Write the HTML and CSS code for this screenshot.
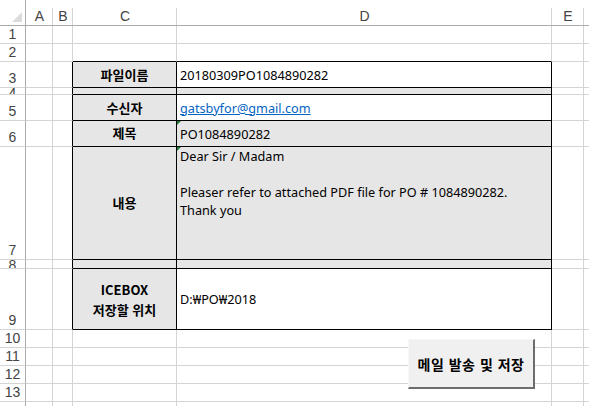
FILE: index.html
```html
<!DOCTYPE html>
<html lang="ko">
<head>
<meta charset="utf-8">
<link rel="stylesheet" href="styles.css">
</head>
<body>
<div class="sheet">
  <div class="row h26 head">
    <div class="rh corner"><svg width="10" height="10" viewBox="0 0 10 10"><polygon points="10,0 10,10 0,10" fill="#dcdcdc"/></svg></div>
    <div class="ch a">A</div><div class="ch b">B</div><div class="ch c">C</div><div class="ch d">D</div><div class="ch e">E</div><div class="ch f"></div>
  </div>
  <div class="row h18">
    <div class="rh">1</div><div class="cell a"></div><div class="cell b"></div><div class="cell c"></div><div class="cell d"></div><div class="cell e"></div><div class="cell f"></div>
  </div>
  <div class="row h18">
    <div class="rh">2</div><div class="cell a"></div><div class="cell b"></div><div class="cell c top"></div><div class="cell d top"></div><div class="cell e"></div><div class="cell f"></div>
  </div>
  <div class="row h26">
    <div class="rh">3</div><div class="cell a"></div><div class="cell b tl"></div>
    <div class="cell c tc fill label">파일이름</div>
    <div class="cell d tc val mid">20180309PO1084890282</div>
    <div class="cell e"></div><div class="cell f"></div>
  </div>
  <div class="row h7">
    <div class="rh clip">4</div><div class="cell a"></div><div class="cell b tl"></div>
    <div class="cell c tc fill"></div><div class="cell d tc fill"></div>
    <div class="cell e"></div><div class="cell f"></div>
  </div>
  <div class="row h26">
    <div class="rh">5</div><div class="cell a"></div><div class="cell b tl"></div>
    <div class="cell c tc fill label">수신자</div>
    <div class="cell d tc val mid"><a class="link" href="#">gatsbyfor@gmail.com</a></div>
    <div class="cell e"></div><div class="cell f"></div>
  </div>
  <div class="row h26">
    <div class="rh">6</div><div class="cell a"></div><div class="cell b tl"></div>
    <div class="cell c tc fill label up">제목</div>
    <div class="cell d tc fill val mid flag">PO1084890282</div>
    <div class="cell e"></div><div class="cell f"></div>
  </div>
  <div class="row h113">
    <div class="rh">7</div><div class="cell a"></div><div class="cell b tl"></div>
    <div class="cell c tc fill label">내용</div>
    <div class="cell d tc fill val body flag">Dear Sir / Madam<br><br>Pleaser refer to attached PDF file for PO # 1084890282.<br>Thank you</div>
    <div class="cell e"></div><div class="cell f"></div>
  </div>
  <div class="row h9">
    <div class="rh clip">8</div><div class="cell a"></div><div class="cell b tl"></div>
    <div class="cell c tc fill"></div><div class="cell d tc fill"></div>
    <div class="cell e"></div><div class="cell f"></div>
  </div>
  <div class="row h61">
    <div class="rh">9</div><div class="cell a"></div><div class="cell b tl"></div>
    <div class="cell c tc fill label two">ICEBOX<br>저장할 위치</div>
    <div class="cell d tc val mid">D:₩PO₩2018</div>
    <div class="cell e"></div><div class="cell f"></div>
  </div>
  <div class="row h18">
    <div class="rh">10</div><div class="cell a"></div><div class="cell b"></div><div class="cell c"></div><div class="cell d"></div><div class="cell e"></div><div class="cell f"></div>
  </div>
  <div class="row h18">
    <div class="rh">11</div><div class="cell a"></div><div class="cell b"></div><div class="cell c"></div><div class="cell d"></div><div class="cell e"></div><div class="cell f"></div>
  </div>
  <div class="row h18">
    <div class="rh">12</div><div class="cell a"></div><div class="cell b"></div><div class="cell c"></div><div class="cell d"></div><div class="cell e"></div><div class="cell f"></div>
  </div>
  <div class="row h18">
    <div class="rh">13</div><div class="cell a"></div><div class="cell b"></div><div class="cell c"></div><div class="cell d"></div><div class="cell e"></div><div class="cell f"></div>
  </div>
  <div class="row h18">
    <div class="rh"></div><div class="cell a"></div><div class="cell b"></div><div class="cell c"></div><div class="cell d"></div><div class="cell e"></div><div class="cell f"></div>
  </div>
  <button class="btn" type="button">메일 발송 및 저장</button>
</div>
</body>
</html>
```

FILE: styles.css
```css
* { box-sizing: border-box; }
html, body { margin: 0; padding: 0; background: #fff; }
body { width: 589px; height: 406px; overflow: hidden; }

.sheet {
  position: relative;
  width: 589px;
  height: 406px;
  overflow: hidden;
  font-family: "Noto Sans", "Noto Sans CJK KR", sans-serif;
  font-size: 13px;
  color: #000;
}

.row { display: flex; overflow: hidden; }
.h26 { height: 26px; }
.h18 { height: 18px; }
.h7 { height: 7px; }
.h9 { height: 9px; }
.h113 { height: 113px; }
.h61 { height: 61px; }

.rh {
  width: 26px;
  flex: none;
  border-right: 1px solid #ababab;
  border-bottom: 1px solid #d4d4d4;
  display: flex;
  align-items: flex-end;
  justify-content: center;
  padding-bottom: 1px;
  font-family: "Liberation Sans", "Noto Sans", sans-serif;
  font-size: 14px;
  line-height: 16px;
  color: #444;
  overflow: hidden;
}
.rh.clip { align-items: flex-start; padding: 0; line-height: 10px; }
.corner {
  border-bottom-color: #ababab;
  align-items: flex-end;
  justify-content: flex-end;
  padding: 0 3px 3px 0;
}
.corner svg { display: block; }

.ch {
  flex: none;
  height: 26px;
  border-bottom: 1px solid #ababab;
  background: linear-gradient(#d4d4d4, #d4d4d4) right 8px / 1px 18px no-repeat;
  display: flex;
  align-items: center;
  justify-content: center;
  padding-top: 6px;
  font-family: "Liberation Sans", "Noto Sans", sans-serif;
  font-size: 14px;
  color: #444;
}

.cell {
  flex: none;
  border-right: 1px solid #d4d4d4;
  border-bottom: 1px solid #d4d4d4;
  overflow: hidden;
  position: relative;
}
.a { width: 27px; }
.b { width: 20px; }
.c { width: 104px; }
.d { width: 375px; }
.e { width: 32px; }
.f { flex: 1; }
.ch.f { flex: 1; background: none; }
.cell.f { border-right: none; }

.top { border-bottom-color: #000; }
.tl { border-right-color: #000; }
.tc { border-right-color: #000; border-bottom-color: #000; }
.fill { background: #e7e6e6; }

.label {
  display: flex;
  align-items: center;
  justify-content: center;
  text-align: center;
  font-family: "Noto Sans CJK KR", sans-serif;
  font-weight: 700;
  font-size: 13px;
  line-height: 18px;
}
.label.up { align-items: flex-start; padding-top: 3px; }
.label.two { line-height: 20px; padding-top: 2px; }

.val { padding-left: 3px; white-space: nowrap; line-height: 18px; font-size: 12.7px; }
.mid { display: flex; align-items: center; }
.body { padding-top: 0; }

.link { color: #0563c1; text-decoration: underline; }

.flag::before {
  content: "";
  position: absolute;
  left: 0;
  top: 0;
  border-top: 4px solid #1e7a34;
  border-right: 4px solid transparent;
}

.btn {
  position: absolute;
  left: 408px;
  top: 339px;
  width: 127px;
  height: 50px;
  margin: 0;
  padding: 0;
  background: #f0f0f0;
  border-style: solid;
  border-width: 1px 2px 2px 1px;
  border-color: #f7f7f7 #6d6d6d #6d6d6d #f7f7f7;
  font-family: "Noto Sans CJK KR", sans-serif;
  font-weight: 700;
  font-size: 14px;
  color: #000;
  letter-spacing: 0.5px;
}
```
